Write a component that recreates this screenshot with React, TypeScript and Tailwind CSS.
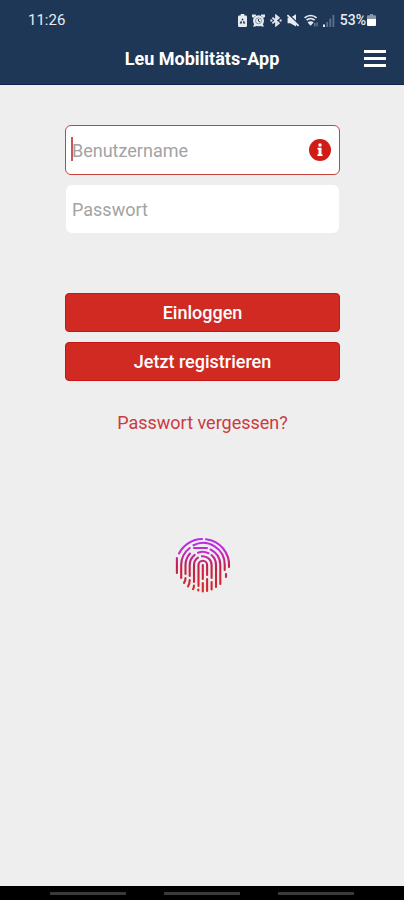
import { useState } from "react";

function StatusIcons() {
  return (
    <div className="flex items-center gap-[5px] text-[#e6ebf2]">
      {/* Battery saver */}
      <svg width="9" height="13" viewBox="0 0 9 13" fill="currentColor">
        <path
          fillRule="evenodd"
          d="M2.7 0h3.6v1.5h1.5A1.2 1.2 0 0 1 9 2.7v9.1A1.2 1.2 0 0 1 7.8 13H1.2A1.2 1.2 0 0 1 0 11.8V2.7a1.2 1.2 0 0 1 1.2-1.2h1.5zM4.5 4.2 3.2 6.3h2.6zM2.7 7.2 1.6 9.6h2.3V7.2zM5.1 7.2v2.4h2.3L6.3 7.2z"
        />
      </svg>
      {/* Alarm */}
      <svg width="13" height="13" viewBox="0 0 13 13" fill="currentColor">
        <path d="M0 2.8V.4h3.6l.6 1L1.2 4zM13 2.8V.4H9.4l-.6 1L11.8 4zM1 12.6l1.6-3.2 2 1.4-1 1.8zM12 12.6l-1.6-3.2-2 1.4 1 1.8z" />
        <circle cx="6.5" cy="6.8" r="5.5" />
        <circle cx="6.5" cy="6.8" r="3" fill="none" stroke="#6d7f98" strokeWidth="0.8" />
        <path d="M6.5 5v2.1l1.5.8" fill="none" stroke="#1f3757" />
      </svg>
      {/* Bluetooth */}
      <svg
        width="12"
        height="13"
        viewBox="0 0 12 13"
        fill="none"
        stroke="currentColor"
        strokeWidth="1.7"
      >
        <path d="m2.4 3.6 6.4 5.6L6 11.5v-10l2.8 2.3-6.4 5.6" />
        <path d="M.4 6.5h2M9.6 6.5h2" strokeWidth="2" />
      </svg>
      {/* Sound off */}
      <svg width="12" height="13" viewBox="0 0 12 13" fill="currentColor">
        <path d="M.6 3.8h2.7L9 .2v12.2L3.3 9.2H.6z" />
        <path d="M1 0 12 10.2" stroke="#1f3757" strokeWidth="1.5" />
        <path d="m.4 1.1 11.2 10.8" stroke="currentColor" strokeWidth="1.8" />
      </svg>
      {/* Wifi */}
      <svg width="14" height="13" viewBox="0 0 14 13">
        <path
          d="M.6 3.8a9 9 0 0 1 12 0M2.6 6.2a6 6 0 0 1 8 0"
          fill="none"
          stroke="currentColor"
          strokeWidth="1.7"
        />
        <path d="M6.6 11.8 3.6 8.4a4.2 4.2 0 0 1 6 0z" fill="currentColor" />
        <path d="M10.8 9v3.6M13 8.4v3.8" stroke="#7587a0" strokeWidth="1.2" />
      </svg>
      {/* Signal */}
      <svg width="12" height="13" viewBox="0 0 12 13">
        <path d="M0 10.5h2V13H0z" fill="currentColor" />
        <path d="M3.3 8h1.8v5H3.3zM6.4 4.5h1.8V13H6.4zM9.5 1h1.8v12H9.5z" fill="#5d7290" />
      </svg>
      <div className="flex items-center gap-px">
        <span className="text-sm font-medium">53%</span>
        <svg width="9" height="12" viewBox="0 0 9 12">
          <path d="M3 0h3v1.3h2a1 1 0 0 1 1 1V5H0V2.3a1 1 0 0 1 1-1h2z" fill="#8796ab" />
          <path d="M0 5h9v6a1 1 0 0 1-1 1H1a1 1 0 0 1-1-1z" fill="#fff" />
        </svg>
      </div>
    </div>
  );
}

function Fingerprint() {
  return (
    <svg width="56" height="56" viewBox="0 0 56 56" fill="none" aria-hidden="true">
      <defs>
        <linearGradient id="ridge" gradientUnits="userSpaceOnUse" x1="28" y1="1" x2="28" y2="56">
          <stop offset="0" stopColor="#b62cf0" />
          <stop offset="0.25" stopColor="#c42bd0" />
          <stop offset="0.5" stopColor="#c0224f" />
          <stop offset="1" stopColor="#d92a20" />
        </linearGradient>
      </defs>
      <g stroke="url(#ridge)" strokeWidth="2.1" strokeLinecap="round">
        <path d="M4 16.5A26.2 26.2 0 0 1 27 2M31 2.2A26 26 0 0 1 54 30M1.9 21v15M51 37v3" />
        <path d="M6.2 41V28a21.7 21.7 0 0 1 8.5-17M18.5 8.2A21.7 21.7 0 0 1 49.7 28v5" />
        <path d="M10.5 37v-9A17.3 17.3 0 0 1 15 16.5M19 11h13M35.5 12.5A17.3 17.3 0 0 1 45.3 28v19M10.5 41q0 3-1.5 5" />
        <path d="M14.7 39V28a13.1 13.1 0 0 1 5-10.2M23 15.7a13.1 13.1 0 0 1 10.5.5M36.5 18A13.1 13.1 0 0 1 41 28v22M14.7 43q0 4-1.7 6.5" />
        <path d="M19 45V28a8.8 8.8 0 0 1 4-7.3M27 19.3a8.8 8.8 0 0 1 9.6 8.7v13M36.6 45v7.5M19 48.5q0 2-1 3.7" />
        <path d="M23.5 49V28a4.3 4.3 0 0 1 8.6 0v10M32.1 42v12M23.3 52.5v1" />
        <path d="M27.8 28v14M27.8 46v8.5" />
      </g>
    </svg>
  );
}

export default function App() {
  const [username, setUsername] = useState("");
  const [password, setPassword] = useState("");

  return (
    <div className="flex min-h-screen w-full flex-col bg-[#eeeeee] font-[Roboto,sans-serif]">
      <header className="border-b border-[#101f4c] bg-[#1f3757] text-white">
        <div className="flex h-10 items-center justify-between px-7">
          <span className="text-[15px] text-[#e6ebf2]">11:26</span>
          <StatusIcons />
        </div>
        <div className="grid h-11 grid-cols-[1fr_auto_1fr] items-start px-4">
          <h1 className="col-start-2 pt-[7px] text-lg leading-6 font-bold">Leu Mobilitäts-App</h1>
          <button
            type="button"
            aria-label="Menü"
            className="mt-2.5 mr-0.5 flex w-[22px] flex-col gap-1 justify-self-end"
          >
            <span className="h-[3px] w-full bg-white" />
            <span className="h-[3px] w-full bg-white" />
            <span className="h-[3px] w-full bg-white" />
          </button>
        </div>
      </header>

      <main className="flex flex-1 flex-col items-center pt-10 pr-16 pl-[65px]">
        <form className="flex w-full flex-col" onSubmit={(e) => e.preventDefault()}>
          {/* Username */}
          <div className="relative">
            <input
              type="text"
              aria-label="Benutzername"
              placeholder="Benutzername"
              value={username}
              onChange={(e) => setUsername(e.target.value)}
              className="h-[50px] w-full rounded-md border border-[#c9423c] bg-white pr-10 pl-1.5 text-lg text-gray-800 placeholder:text-[#a3a3a3]"
            />
            <span className="absolute top-3 left-1.5 h-6 w-0.5 bg-[#cc5558]" />
            <svg
              className="absolute top-3.5 right-[9px]"
              width="22"
              height="22"
              viewBox="0 0 22 22"
              aria-hidden="true"
            >
              <circle cx="11" cy="11" r="11" fill="#d01c16" />
              <circle cx="11" cy="6" r="1.7" fill="#fff" />
              <path d="M8.5 8.8h4v6.4h1V17h-5v-1.8h1v-4.6h-1z" fill="#fff" />
            </svg>
          </div>
          {/* Password */}
          <div className="mt-2.5 px-px">
            <input
              type="password"
              aria-label="Passwort"
              placeholder="Passwort"
              value={password}
              onChange={(e) => setPassword(e.target.value)}
              className="h-12 w-full rounded-md bg-white px-1.5 text-lg text-gray-800 placeholder:text-[#a3a3a3]"
            />
          </div>

          <div className="mt-15 flex flex-col gap-2.5 text-lg font-medium text-white">
            <button type="submit" className="h-[39px] rounded-sm border border-[#cb1414] bg-[#d12a22]">
              Einloggen
            </button>
            <button type="button" className="h-[39px] rounded-sm border border-[#cb1414] bg-[#d12a22]">
              Jetzt registrieren
            </button>
          </div>
        </form>

        <a href="#" className="mt-7 text-lg text-[#cb3a40]">
          Passwort vergessen?
        </a>

        <button type="button" aria-label="Mit Fingerabdruck anmelden" className="mt-25">
          <Fingerprint />
        </button>
      </main>

      {/* System navigation */}
      <nav className="flex h-3.5 items-center justify-center gap-[38px] bg-black">
        <span className="h-[3px] w-[76px] bg-[#3a3a3a]" />
        <span className="h-[3px] w-[76px] bg-[#3a3a3a]" />
        <span className="h-[3px] w-[76px] bg-[#3a3a3a]" />
      </nav>
    </div>
  );
}
